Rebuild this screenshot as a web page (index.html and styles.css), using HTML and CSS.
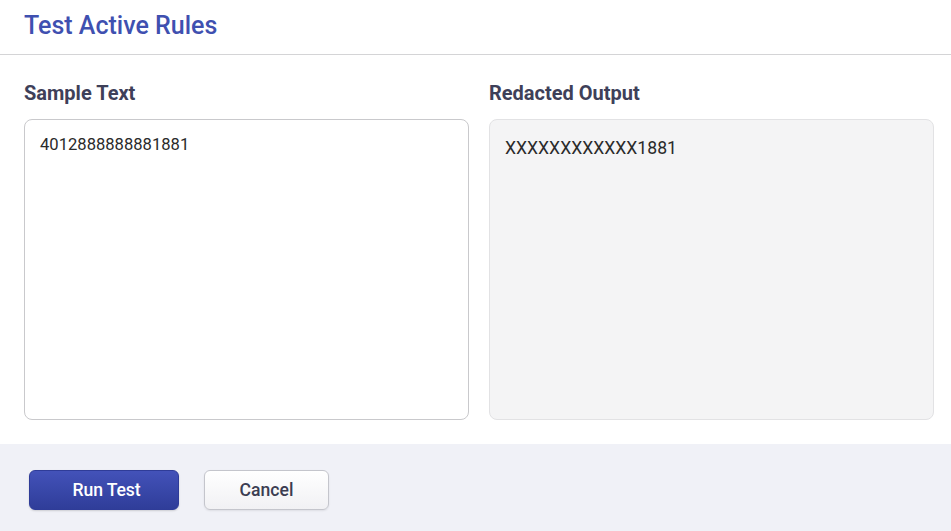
FILE: index.html
```html
<!DOCTYPE html>
<html>
<head>
<meta charset="utf-8">
<link rel="stylesheet" href="styles.css">
</head>
<body>
<div class="dialog">
  <header class="head">
    <h1 class="title">Test Active Rules</h1>
  </header>
  <main class="body">
    <section class="col">
      <h2 class="label">Sample Text</h2>
      <div class="box input">4012888888881881</div>
    </section>
    <section class="col">
      <h2 class="label">Redacted Output</h2>
      <div class="box output">XXXXXXXXXXXX1881</div>
    </section>
  </main>
  <footer class="foot">
    <button class="btn primary">Run Test</button>
    <button class="btn secondary">Cancel</button>
  </footer>
</div>
</body>
</html>
```

FILE: styles.css
```css
* { box-sizing: border-box; }
html, body { margin: 0; padding: 0; background: #fff; }
body { font-family: Roboto, "Liberation Sans", sans-serif; width: 951px; height: 531px; overflow: hidden; }
.dialog { display: flex; flex-direction: column; height: 531px; }
.head { height: 56px; border-bottom: 1px solid #d4d4d6; padding: 0 24px; display: flex; align-items: center; }
.title { margin: 0; margin-top: -4px; font-size: 25px; font-weight: 500; color: #3f50b0; letter-spacing: 0; }
.body { display: flex; gap: 20px; padding: 27px 17px 24px 24px; flex: 1; }
.col { flex: 0 0 445px; display: flex; flex-direction: column; }
.label { margin: 0 0 14px; font-size: 20px; font-weight: 700; color: #3e4059; line-height: 23px; }
.box { height: 301px; border-radius: 8px; color: #2a2a2a; }
.input { border: 1px solid #c9c9cc; background: #fff; padding: 15px 15px; font-size: 16.6px; }
.output { border: 1px solid #e2e2e4; background: #f4f4f5; padding: 18px 15px; font-size: 17.6px; }
.foot { height: 87px; background: #f0f1f7; display: flex; align-items: flex-start; gap: 25px; padding: 26px 29px; }
.btn { height: 40px; border-radius: 6px; font-family: Roboto, "Liberation Sans", sans-serif; font-size: 17.6px; font-weight: 500; cursor: pointer; }
.primary { width: 150px; padding: 0 0 0 5px; border: 1px solid #2f3c98; color: #fff; background: linear-gradient(#4352b9, #2f3d99); box-shadow: 0 1px 2px rgba(0,0,0,0.15); letter-spacing: -0.1px; }
.secondary { width: 125px; border: 1px solid #c4c5cc; color: #3b3d52; background: linear-gradient(#ffffff, #f1f1f4); box-shadow: 0 1px 2px rgba(0,0,0,0.08); }
```
